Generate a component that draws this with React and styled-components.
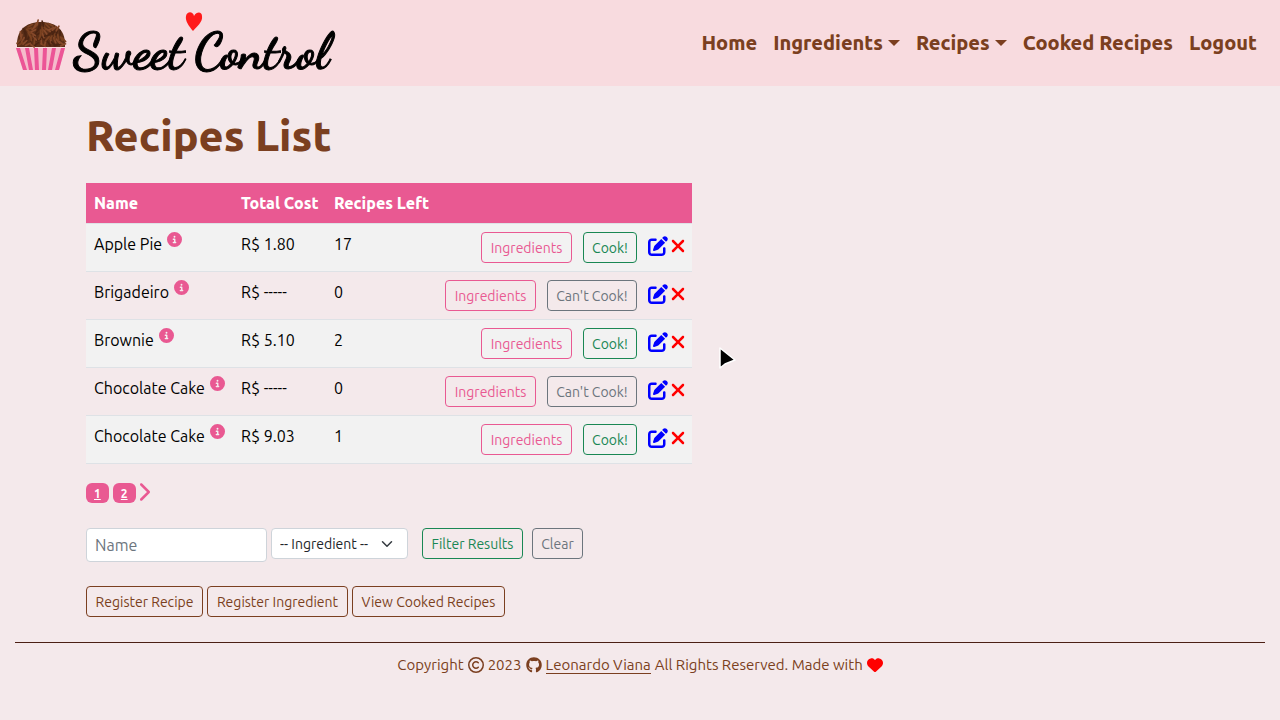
import React from "react";
import styled, { createGlobalStyle, css } from "styled-components";
import {
  FaCircleInfo,
  FaPenToSquare,
  FaXmark,
  FaChevronRight,
  FaRegCopyright,
  FaGithub,
  FaHeart,
} from "react-icons/fa6";

const color = {
  page: "#f4e9eb",
  nav: "#f8dbdf",
  brown: "#7b3f20",
  pink: "#e95992",
  green: "#198754",
  gray: "#6c757d",
  stripe: "#f2f2f2",
  line: "#dee2e6",
  field: "#ced4da",
};

const GlobalStyle = createGlobalStyle`
  *, *::before, *::after { box-sizing: border-box; }
  body {
    margin: 0;
    background: ${color.page};
    color: #000;
    font-family: Ubuntu, "Noto Sans", sans-serif;
    font-size: 16px;
    line-height: 24px;
  }
  button, input, select { font-family: inherit; margin: 0; }
`;

const Page = styled.div`
  position: relative;
`;

const NavBar = styled.nav`
  display: flex;
  align-items: center;
  justify-content: space-between;
  min-height: 86px;
  padding: 0 15px;
  background: ${color.nav};
`;

const Brand = styled.a`
  display: block;
  svg { display: block; }
`;

const Menu = styled.ul`
  display: flex;
  list-style: none;
  margin: 0;
  padding: 0;
`;

const MenuLink = styled.a`
  display: flex;
  align-items: center;
  gap: 5px;
  padding: 8px;
  color: ${color.brown};
  font-size: 20px;
  line-height: 30px;
  font-weight: 800;
  text-decoration: none;
  white-space: nowrap;
  ${(p) =>
    p.$dropdown &&
    css`
      &::after {
        content: "";
        border: 6px solid transparent;
        border-top-color: ${color.brown};
        border-bottom: 0;
      }
    `}
`;

const Main = styled.main`
  max-width: 1140px;
  margin: 0 auto;
  padding: 20px 16px 0;
`;

const Title = styled.h1`
  margin: 0 0 19px;
  color: ${color.brown};
  font-size: 43px;
  line-height: 58px;
  font-weight: 800;
`;

const Table = styled.table`
  width: 606px;
  max-width: 100%;
  border-collapse: separate;
  border-spacing: 0;
  table-layout: fixed;
`;

const Col = styled.col`
  width: ${(p) => p.$w}px;
`;

const HeadCell = styled.th`
  height: 41px;
  padding: 8px;
  background: ${color.pink};
  background-clip: padding-box;
  border-bottom: 1px solid ${color.line};
  color: #fff;
  text-align: left;
  font-weight: 800;
  white-space: nowrap;
`;

const Row = styled.tr`
  &:nth-child(odd) { background: ${color.stripe}; }
`;

const Cell = styled.td`
  height: 48px;
  padding: 8px 7px 8px 8px;
  border-bottom: 1px solid ${color.line};
  vertical-align: top;
  white-space: nowrap;
`;

const NameLine = styled.div`
  display: flex;
  align-items: flex-start;
  gap: 5px;
`;

const InfoButton = styled.button`
  padding: 0;
  border: 0;
  background: none;
  color: ${color.pink};
  svg { display: block; width: 15px; height: 15px; }
`;

const Actions = styled.div`
  display: flex;
  justify-content: flex-end;
  gap: 11px;
`;

const IconPair = styled.div`
  display: flex;
  gap: 3px;
  padding-top: 4px;
`;

const IconButton = styled.button`
  padding: 0;
  border: 0;
  background: none;
  height: 20px;
  color: ${(p) => p.$color};
  svg { display: block; width: ${(p) => p.$w}px; height: 20px; }
`;

const Button = styled.button`
  min-width: ${(p) => p.$w}px;
  height: 31px;
  padding: 5px 8px 3px;
  border: 1px solid ${(p) => p.$color};
  border-radius: 4px;
  background: transparent;
  color: ${(p) => p.$color};
  font-size: 14px;
  line-height: 21px;
  white-space: nowrap;
`;

const Pager = styled.div`
  display: flex;
  gap: 4px;
  margin-top: 19px;
`;

const PageLink = styled.a`
  height: 20px;
  padding: 5px 8px 3px;
  border-radius: 6px;
  background: ${color.pink};
  color: #fff;
  font-size: 12px;
  line-height: 12px;
  font-weight: 700;
  text-decoration: underline;
`;

const NextLink = styled.a`
  color: ${color.pink};
  svg { display: block; width: 10px; height: 18px; }
`;

const Filters = styled.form`
  display: flex;
  align-items: flex-start;
  gap: 4px;
  margin: 25px 0 0;
`;

const NameInput = styled.input`
  width: 181px;
  height: 34px;
  padding: 4px 8px;
  border: 1px solid ${color.field};
  border-radius: 4px;
  background: #fff;
  font-size: 16px;
  &::placeholder { color: ${color.gray}; opacity: 1; }
`;

const SelectWrap = styled.div`
  display: grid;
  align-items: center;
  margin-right: 10px;
  select, svg { grid-area: 1 / 1; }
  svg { justify-self: end; margin-right: 15px; pointer-events: none; }
`;

const Select = styled.select`
  appearance: none;
  width: 137px;
  height: 31px;
  padding: 4px 8px;
  border: 1px solid ${color.field};
  border-radius: 4px;
  background: #fff;
  color: #212529;
  font-size: 14px;
`;

const FilterButtons = styled.div`
  display: flex;
  gap: 9px;
`;

const Shortcuts = styled.div`
  display: flex;
  gap: 4px;
  margin-top: 24px;
`;

const Footer = styled.footer`
  display: flex;
  justify-content: center;
  align-items: center;
  gap: 4px;
  margin: 25px 15px 0;
  padding-top: 10px;
  border-top: 1px solid #4b1f14;
  color: ${color.brown};
  font-size: 15px;
  svg { display: block; width: 16px; height: 16px; }
`;

const FooterLink = styled.a`
  color: inherit;
  line-height: 16px;
  text-decoration: none;
  border-bottom: 1px solid ${color.brown};
`;

const Pointer = styled.svg`
  position: absolute;
  left: 718px;
  top: 346px;
`;

const LogoText = styled.text`
  font-family: "Dancing Script", "Kaushan Script", "Brush Script MT", "URW Chancery L", "Z003", cursive;
  font-weight: 700;
  font-size: ${(p) => p.$size}px;
  fill: #000;
  stroke: #000;
  stroke-width: 1px;
`;

// Chocolate sprinkles scattered over the dome of the brigadeiro.
const sprinkles = Array.from({ length: 130 }, (_, i) => {
  const a = i * 2.399;
  const r = Math.sqrt((i + 1) / 130);
  const x = 25 + Math.cos(a) * r * 24;
  const y = 38 + Math.sin(a) * r * 23;
  const t = 0.5 + ((i * 1.7) % 2.4);
  return { x, y, dx: Math.cos(t) * 2.6, dy: Math.sin(t) * 2.6, tone: i % 3 };
}).filter((s) => s.y < 39);

const tones = ["#7b4221", "#4a2412", "#86492a"];

function Logo() {
  return (
    <svg width="340" height="86" viewBox="-1 -7 340 86" role="img" aria-label="Sweet Control">
      <path d="M1 40C0 24 9 15 25 15S50 24 49 40Z" fill="#5b2f18" />
      {sprinkles.map((s, i) => (
        <line
          key={i}
          x1={s.x - s.dx}
          y1={s.y - s.dy}
          x2={s.x + s.dx}
          y2={s.y + s.dy}
          stroke={tones[s.tone]}
          strokeWidth="1.7"
          strokeLinecap="round"
        />
      ))}
      <path d="M0 41H49L43 63H7Z" fill="#f5bccb" />
      <path
        d="M0 41h4l7 22H7ZM9 41h4l4 22h-4ZM18 41h4l1 22h-4ZM27 41h4l-1 22h-4ZM36 41h4l-4 22h-4ZM45 41h4l-6 22h-4Z"
        fill="#ec5596"
      />
      <LogoText x="57" y="61" $size={51}>Sweet</LogoText>
      <LogoText x="178" y="61" $size={51}>Control</LogoText>
      <path
        d="M177 24C173 19 169 14 170 9C171 4 177 4 178 9C181 4 186 5 186 9C187 15 181 19 177 24Z"
        fill="#ff1a1a"
      />
    </svg>
  );
}

const recipes = [
  { name: "Apple Pie", cost: "R$ 1.80", left: 17 },
  { name: "Brigadeiro", cost: "R$ -----", left: 0 },
  { name: "Brownie", cost: "R$ 5.10", left: 2 },
  { name: "Chocolate Cake", cost: "R$ -----", left: 0 },
  { name: "Chocolate Cake", cost: "R$ 9.03", left: 1 },
];

const menu = [
  { label: "Home" },
  { label: "Ingredients", dropdown: true },
  { label: "Recipes", dropdown: true },
  { label: "Cooked Recipes" },
  { label: "Logout" },
];

export default function App() {
  return (
    <Page>
      <GlobalStyle />
      <NavBar>
        <Brand href="#home"><Logo /></Brand>
        <Menu>
          {menu.map((m) => (
            <li key={m.label}>
              <MenuLink href="#" $dropdown={m.dropdown}>{m.label}</MenuLink>
            </li>
          ))}
        </Menu>
      </NavBar>

      <Main>
        <Title>Recipes List</Title>
        <Table>
          <colgroup>
            <Col $w={147} />
            <Col $w={93} />
            <Col $w={111} />
            <Col $w={255} />
          </colgroup>
          <thead>
            <tr>
              <HeadCell>Name</HeadCell>
              <HeadCell>Total Cost</HeadCell>
              <HeadCell>Recipes Left</HeadCell>
              <HeadCell />
            </tr>
          </thead>
          <tbody>
            {recipes.map((r, i) => (
              <Row key={i}>
                <Cell>
                  <NameLine>
                    {r.name}
                    <InfoButton aria-label="Details"><FaCircleInfo /></InfoButton>
                  </NameLine>
                </Cell>
                <Cell>{r.cost}</Cell>
                <Cell>{r.left}</Cell>
                <Cell>
                  <Actions>
                    <Button $color={color.pink} $w={91}>Ingredients</Button>
                    {r.left > 0 ? (
                      <Button $color={color.green} $w={54}>Cook!</Button>
                    ) : (
                      <Button $color={color.gray} $w={90}>Can't Cook!</Button>
                    )}
                    <IconPair>
                      <IconButton $color="#0000ff" $w={20} aria-label="Edit"><FaPenToSquare /></IconButton>
                      <IconButton $color="#ff0000" $w={14} aria-label="Delete">
                        <FaXmark viewBox="32 0 320 512" />
                      </IconButton>
                    </IconPair>
                  </Actions>
                </Cell>
              </Row>
            ))}
          </tbody>
        </Table>

        <Pager>
          <PageLink href="#1">1</PageLink>
          <PageLink href="#2">2</PageLink>
          <NextLink href="#next" aria-label="Next page">
            <FaChevronRight viewBox="64 32 256 448" />
          </NextLink>
        </Pager>

        <Filters onSubmit={(e) => e.preventDefault()}>
          <NameInput placeholder="Name" aria-label="Name" />
          <SelectWrap>
            <Select aria-label="Ingredient">
              <option>-- Ingredient --</option>
            </Select>
            <svg width="12" height="12" viewBox="0 0 16 16" fill="none" stroke="#343a40" strokeWidth="2" strokeLinecap="round" strokeLinejoin="round">
              <path d="m2 5 6 6 6-6" />
            </svg>
          </SelectWrap>
          <FilterButtons>
            <Button type="submit" $color={color.green} $w={101}>Filter Results</Button>
            <Button type="reset" $color={color.gray} $w={51}>Clear</Button>
          </FilterButtons>
        </Filters>

        <Shortcuts>
          <Button $color={color.brown} $w={117}>Register Recipe</Button>
          <Button $color={color.brown} $w={141}>Register Ingredient</Button>
          <Button $color={color.brown} $w={153}>View Cooked Recipes</Button>
        </Shortcuts>
      </Main>

      <Footer>
        <span>Copyright</span>
        <FaRegCopyright />
        <span>2023</span>
        <FaGithub />
        <FooterLink href="#author">Leonardo Viana</FooterLink>
        <span>All Rights Reserved. Made with</span>
        <FaHeart color="#ff0000" />
      </Footer>

      <Pointer width="20" height="25" viewBox="0 0 20 25" aria-hidden="true">
        <path d="M2 2V22L7 18L17 14Z" fill="#000" stroke="#fff" strokeWidth="1.500" strokeLinejoin="round" />
      </Pointer>
    </Page>
  );
}
